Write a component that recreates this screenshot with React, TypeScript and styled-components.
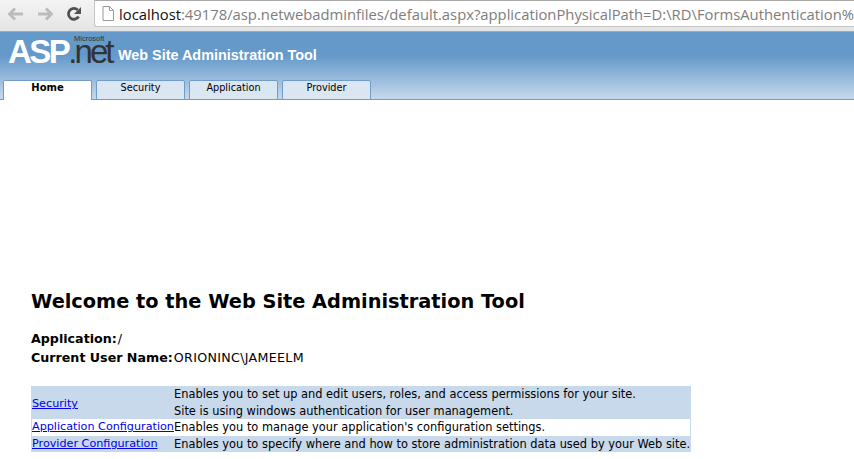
import React from "react";
import styled, { createGlobalStyle } from "styled-components";

const GlobalStyle = createGlobalStyle`
  html, body {
    margin: 0;
    padding: 0;
    background: #ffffff;
    overflow: hidden;
  }
  body {
    font-family: "DejaVu Sans", Verdana, sans-serif;
  }
`;

const Page = styled.div`
  width: 854px;
  height: 459px;
  overflow: hidden;
  display: flex;
  flex-direction: column;
`;

const Toolbar = styled.div`
  height: 32px;
  box-sizing: border-box;
  display: flex;
  align-items: flex-start;
  padding-left: 8px;
  background: linear-gradient(#f4f4f4, #e4e4e4);
  border-bottom: 1px solid #a9a9a9;
`;

const NavButton = styled.svg<{ $gap: number }>`
  flex: none;
  margin: 6px ${(p) => p.$gap}px 0 0;
`;

const AddressBar = styled.div`
  flex: 1;
  height: 27px;
  box-sizing: border-box;
  display: flex;
  align-items: center;
  padding-left: 7px;
  background: #ffffff;
  border: 1px solid #c4c4c4;
  border-top-color: #a9a9a9;
  border-right: none;
  border-radius: 0 0 0 3px;
  overflow: hidden;
  white-space: nowrap;
`;

const PageIcon = styled.svg`
  flex: none;
  margin-right: 5px;
`;

const Url = styled.span`
  font-family: "Open Sans", "Liberation Sans", sans-serif;
  font-size: 14.8px;
  color: #7d7d7d;
  span {
    color: #111111;
  }
`;

const Banner = styled.div`
  height: 68px;
  box-sizing: border-box;
  display: flex;
  flex-direction: column;
  justify-content: space-between;
  background: linear-gradient(#6499ca 0, #6499ca 35%, #c6d9eb 100%);
  border-bottom: 1px solid #6f9ccb;
`;

const Brand = styled.div`
  display: flex;
  align-items: center;
  height: 36px;
  padding-left: 8px;
`;

const Logo = styled.div`
  position: relative;
  display: flex;
  align-items: baseline;
  width: 110px;
  height: 30px;
  line-height: 34px;
`;

const LogoAsp = styled.span`
  font-family: "Liberation Sans", Arial, sans-serif;
  font-weight: bold;
  font-size: 33px;
  letter-spacing: -2.5px;
  color: #ffffff;
`;

const LogoNet = styled.span`
  font-family: "Liberation Sans", Arial, sans-serif;
  font-size: 33px;
  letter-spacing: -3px;
  color: #333333;
`;

const LogoSmall = styled.span`
  position: absolute;
  left: 66px;
  top: 0;
  font-family: "Liberation Sans", Arial, sans-serif;
  font-size: 7.5px;
  line-height: 8px;
  color: #333333;
`;

const BannerTitle = styled.div`
  margin-top: 9px;
  font-family: "Liberation Sans", Arial, sans-serif;
  font-weight: bold;
  font-size: 14.4px;
  color: #ffffff;
`;

const Tabs = styled.div`
  display: flex;
  gap: 4px;
  padding-left: 3px;
`;

const Tab = styled.div<{ $active?: boolean }>`
  width: 89px;
  height: 20px;
  margin-bottom: -1px;
  box-sizing: border-box;
  text-align: center;
  font-size: ${(p) => (p.$active ? "10px" : "9.7px")};
  line-height: 14px;
  color: #000000;
  font-weight: ${(p) => (p.$active ? "bold" : "normal")};
  background: ${(p) => (p.$active ? "#ffffff" : "#dae6f2")};
  border: 1px solid #6f9ccb;
  border-bottom: ${(p) => (p.$active ? "none" : "1px solid #6f9ccb")};
  border-top-left-radius: 2px;
  border-top-right-radius: 2px;
`;

const Content = styled.div`
  padding: 190px 0 0 31px;
`;

const Heading = styled.h1`
  margin: 0 0 15px;
  font-size: 19.33px;
  line-height: 24px;
  font-weight: bold;
  color: #000000;
`;

const InfoLine = styled.div`
  font-size: 12.67px;
  line-height: 19px;
  color: #000000;
  b {
    font-weight: bold;
    margin-right: 1px;
  }
`;

const UserValue = styled.span`
  letter-spacing: 0.3px;
`;

const Features = styled.table`
  margin-top: 19px;
  width: 660px;
  table-layout: fixed;
  border-collapse: separate;
  border-spacing: 0;
  font-size: 11.4px;
  line-height: 16.5px;
  color: #000000;
`;

const Row = styled.tr<{ $alt?: boolean }>`
  background: ${(p) => (p.$alt ? "#ffffff" : "#c8d9ec")};
`;

const LinkCell = styled.td<{ $tall?: boolean }>`
  padding: ${(p) => (p.$tall ? "4px" : "0")} 0 0;
  width: 142px;
  font-size: 11.2px;
  white-space: nowrap;
  border-left: 1px solid #c8d9ec;
  a {
    color: #0000ee;
  }
`;

const TextCell = styled.td`
  padding: 0;
  white-space: nowrap;
  border-right: 1px solid #c8d9ec;
`;

export default function App() {
  return (
    <Page>
      <GlobalStyle />
      <Toolbar>
        <NavButton $gap={13} width="16" height="16" viewBox="0 0 16 16">
          <path d="M7 2.5 1.5 8 7 13.5M2 8h13" fill="none" stroke="#bcbcbc" strokeWidth="3" />
        </NavButton>
        <NavButton $gap={13} width="16" height="16" viewBox="0 0 16 16">
          <path d="M9 2.5 14.5 8 9 13.5M14 8H1" fill="none" stroke="#bcbcbc" strokeWidth="3" />
        </NavButton>
        <NavButton $gap={12} width="16" height="16" viewBox="0 0 16 16">
          <path d="M12.6 10.5A5.4 5.4 0 1 1 11.7 4" fill="none" stroke="#505050" strokeWidth="2.8" />
          <path d="M15 1v7H8z" fill="#505050" />
        </NavButton>
        <AddressBar>
          <PageIcon width="12" height="15" viewBox="0 0 12 15">
            <path d="M1 .5h6.5l4 4v10H1z M7.5 .5v4h4" fill="#fff" stroke="#9a9a9a" />
          </PageIcon>
          <Url><span>localhost</span>:49178/asp.netwebadminfiles/default.aspx?applicationPhysicalPath=D:\RD\FormsAuthentication%</Url>
        </AddressBar>
      </Toolbar>
      <Banner>
        <Brand>
          <Logo>
            <LogoAsp>ASP</LogoAsp>
            <LogoNet>.net</LogoNet>
            <LogoSmall>Microsoft</LogoSmall>
          </Logo>
          <BannerTitle>Web Site Administration Tool</BannerTitle>
        </Brand>
        <Tabs>
          <Tab $active>Home</Tab>
          <Tab>Security</Tab>
          <Tab>Application</Tab>
          <Tab>Provider</Tab>
        </Tabs>
      </Banner>
      <Content>
        <Heading>Welcome to the Web Site Administration Tool</Heading>
        <InfoLine><b>Application:</b>/</InfoLine>
        <InfoLine><b>Current User Name:</b><UserValue>ORIONINC\JAMEELM</UserValue></InfoLine>
        <Features>
          <tbody>
            <Row>
              <LinkCell $tall><a href="#security">Security</a></LinkCell>
              <TextCell>Enables you to set up and edit users, roles, and access permissions for your site.<br />Site is using windows authentication for user management.</TextCell>
            </Row>
            <Row $alt>
              <LinkCell><a href="#application">Application Configuration</a></LinkCell>
              <TextCell>Enables you to manage your application's configuration settings.</TextCell>
            </Row>
            <Row>
              <LinkCell><a href="#provider">Provider Configuration</a></LinkCell>
              <TextCell>Enables you to specify where and how to store administration data used by your Web site.</TextCell>
            </Row>
          </tbody>
        </Features>
      </Content>
    </Page>
  );
}
